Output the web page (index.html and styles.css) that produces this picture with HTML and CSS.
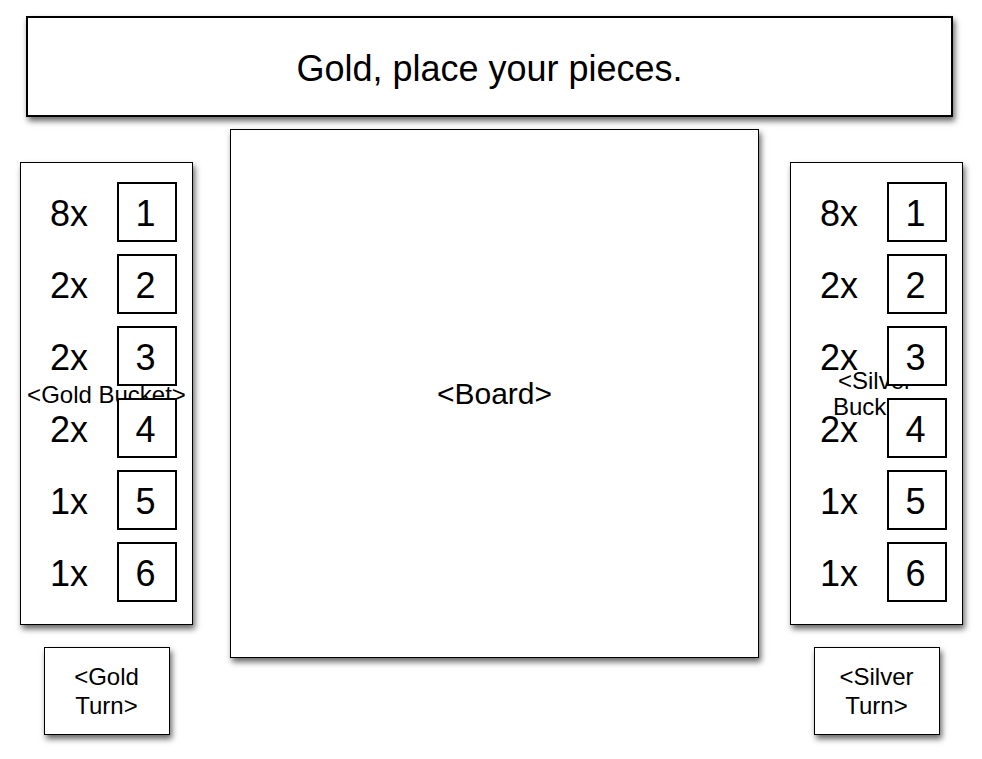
FILE: index.html
```html
<!DOCTYPE html>
<html lang="en">
<head>
  <meta charset="UTF-8">
  <title>Place Your Pieces</title>
  <link rel="stylesheet" href="styles.css">
</head>
<body>

<header class="status">Gold, place your pieces.</header>

<main class="table">
  <section class="side">
    <div class="bucket">
      <div class="bucket-label">&lt;Gold Bucket&gt;</div>
      <div class="row"><span class="count">8x</span><div class="piece">1</div></div>
      <div class="row"><span class="count">2x</span><div class="piece">2</div></div>
      <div class="row"><span class="count">2x</span><div class="piece">3</div></div>
      <div class="row"><span class="count">2x</span><div class="piece">4</div></div>
      <div class="row"><span class="count">1x</span><div class="piece">5</div></div>
      <div class="row"><span class="count">1x</span><div class="piece">6</div></div>
    </div>
    <div class="turn">&lt;Gold<br>Turn&gt;</div>
  </section>

  <section class="board">&lt;Board&gt;</section>

  <section class="side side-right">
    <div class="bucket">
      <div class="bucket-label narrow">&lt;Silver Bucket&gt;</div>
      <div class="row"><span class="count">8x</span><div class="piece">1</div></div>
      <div class="row"><span class="count">2x</span><div class="piece">2</div></div>
      <div class="row"><span class="count">2x</span><div class="piece">3</div></div>
      <div class="row"><span class="count">2x</span><div class="piece">4</div></div>
      <div class="row"><span class="count">1x</span><div class="piece">5</div></div>
      <div class="row"><span class="count">1x</span><div class="piece">6</div></div>
    </div>
    <div class="turn">&lt;Silver<br>Turn&gt;</div>
  </section>
</main>

</body>
</html>
```

FILE: styles.css
```css
* {
  box-sizing: border-box;
  margin: 0;
  padding: 0;
}

body {
  font-family: 'Liberation Sans', Arial, sans-serif;
  background: #fff;
  color: #000;
  padding-bottom: 24px;
}

.status {
  margin: 16px 29px 0 26px;
  height: 101px;
  border: 2px solid #000;
  box-shadow: 2px 4px 6px rgba(0, 0, 0, 0.6);
  display: flex;
  align-items: center;
  justify-content: center;
  font-size: 36px;
  padding-top: 4px;
}

.table {
  display: flex;
  align-items: flex-start;
  margin-top: 12px;
  padding-left: 20px;
}

.side {
  width: 173px;
  padding-top: 33px;
  display: flex;
  flex-direction: column;
  align-items: center;
}

.side-right {
  margin-left: 31px;
}

.bucket {
  position: relative;
  width: 173px;
  height: 463px;
  border: 1px solid #000;
  box-shadow: 2px 4px 6px rgba(0, 0, 0, 0.6);
  display: flex;
  flex-direction: column;
  justify-content: center;
  gap: 12px;
  padding: 0 15px 3px 15px;
}

.bucket-label {
  position: absolute;
  left: 0;
  right: 0;
  top: 218px;
  text-align: center;
  font-size: 24px;
  white-space: nowrap;
}

.bucket-label.narrow {
  left: 42px;
  right: auto;
  width: 84px;
  top: 205px;
  white-space: normal;
  line-height: 26px;
}

.row {
  display: flex;
  align-items: center;
  height: 60px;
}

.count {
  width: 66px;
  text-align: center;
  font-size: 36px;
  padding-top: 3px;
  position: relative;
  z-index: 1;
}

.piece {
  position: relative;
  z-index: 1;
  margin-left: 15px;
  width: 60px;
  height: 60px;
  border: 2px solid #000;
  background: #fff;
  display: flex;
  align-items: center;
  justify-content: center;
  font-size: 36px;
  padding: 3px 3px 0 0;
}

.turn {
  margin-top: 22px;
  width: 126px;
  height: 88px;
  border: 1px solid #000;
  box-shadow: 2px 4px 6px rgba(0, 0, 0, 0.6);
  display: flex;
  align-items: center;
  justify-content: center;
  text-align: center;
  font-size: 24px;
  line-height: 29px;
}

.board {
  margin-left: 37px;
  width: 529px;
  height: 529px;
  border: 1px solid #000;
  box-shadow: 2px 4px 6px rgba(0, 0, 0, 0.6);
  display: flex;
  align-items: center;
  justify-content: center;
  font-size: 30px;
}
```
